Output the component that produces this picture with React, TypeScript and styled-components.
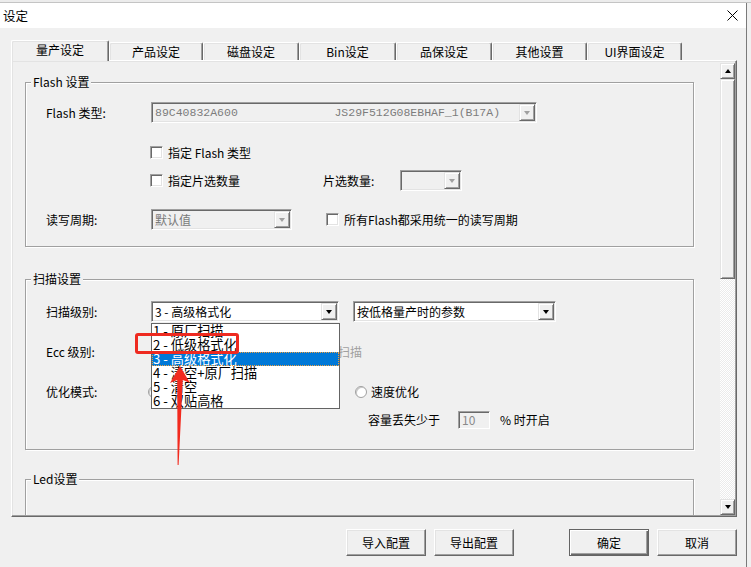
import React from "react";
import styled, { createGlobalStyle, css } from "styled-components";

const FONT = `"Noto Sans CJK SC", "Noto Sans", sans-serif`;

const Global = createGlobalStyle`
  html, body { margin: 0; padding: 0; background: #f0f0f0; }
  body { font-family: ${FONT}; font-size: 12px; color: #000; }
  * { box-sizing: border-box; }
`;

const Page = styled.div`
  position: relative;
  width: 751px;
  height: 567px;
  overflow: hidden;
  background: #f0f0f0;
  font-family: ${FONT};
  font-size: 12px;
  line-height: 14px;
`;

const TopStrip = styled.div`
  height: 3px;
  background: #ececec;
  border-bottom: 1px solid #c4c4c4;
`;

const Window = styled.div`
  width: 747px;
  height: 564px;
  border-right: 1px solid #7a7a7a;
  background: #f0f0f0;
  display: flex;
  flex-direction: column;
`;

const TitleBar = styled.div`
  height: 25px;
  flex-shrink: 0;
  background: #fff;
  display: flex;
  align-items: center;
  justify-content: space-between;
  padding: 0 8px 0 3px;
`;

const Title = styled.span`
  font-size: 12.5px;
`;

const Body = styled.div`
  padding: 12px 9px 0 11px;
  display: flex;
  flex-direction: column;
`;

const TabRow = styled.div`
  display: flex;
  align-items: flex-end;
  height: 21px;
  margin-bottom: -1px;
  position: relative;
  z-index: 1;
`;

const Tab = styled.div<{ $w: number; $active?: boolean }>`
  width: ${(p) => p.$w}px;
  height: ${(p) => (p.$active ? 21 : 18)}px;
  margin-bottom: ${(p) => (p.$active ? 0 : 1)}px;
  display: flex;
  align-items: center;
  justify-content: center;
  padding-bottom: ${(p) => (p.$active ? 2 : 0)}px;
  background: #f0f0f0;
  border-top: 1px solid #fff;
  border-left: 1px solid #fff;
  border-right: 1px solid #696969;
  border-radius: 2px 2px 0 0;
  box-shadow: inset -1px 0 0 #a0a0a0, inset 1px 1px 0 #e3e3e3;
  flex-shrink: 0;
`;

const Panel = styled.div`
  width: 726px;
  height: 457px;
  display: flex;
  border: 1px solid;
  border-color: #fff #696969 #696969 #fff;
  box-shadow: inset -1px -1px 0 #a0a0a0, inset 1px 1px 0 #e3e3e3;
`;

const Content = styled.div`
  flex: 1;
  position: relative;
  overflow: hidden;
  padding-left: 13px;
  margin-bottom: 1px;
`;

const Group = styled.div<{ $mt: number; $pb: number }>`
  position: relative;
  width: 669px;
  margin-top: ${(p) => p.$mt}px;
  padding: 0 0 ${(p) => p.$pb}px 20px;
  border: 1px solid #a0a0a0;
  box-shadow: 1px 1px 0 #fff, inset 1px 1px 0 #fff;
`;

const Legend = styled.span`
  position: absolute;
  top: -8px;
  left: 5px;
  padding: 0 2px;
  background: #f0f0f0;
  line-height: 14px;
`;

const Row = styled.div<{ $mt: number; $pl?: number }>`
  display: flex;
  align-items: center;
  height: 21px;
  margin-top: ${(p) => p.$mt}px;
  padding-left: ${(p) => p.$pl ?? 0}px;
  white-space: nowrap;
`;

const FieldLabel = styled.span<{ $w?: number }>`
  width: ${(p) => p.$w ?? 105}px;
  flex-shrink: 0;
`;

const Cell = styled.div<{ $w?: number; $ml?: number }>`
  display: flex;
  align-items: center;
  flex-shrink: 0;
  ${(p) => (p.$w !== undefined ? `width: ${p.$w}px;` : "")}
  margin-left: ${(p) => p.$ml ?? 0}px;
`;

const Combo = styled.div<{ $w: number; $disabled?: boolean }>`
  position: relative;
  width: ${(p) => p.$w}px;
  height: 21px;
  flex-shrink: 0;
  display: flex;
  align-items: center;
  padding: 0 1px 0 3px;
  background: ${(p) => (p.$disabled ? "#f0f0f0" : "#fff")};
  border: 1px solid;
  border-color: #a0a0a0 #fff #fff #a0a0a0;
  box-shadow: inset 1px 1px 0 #696969, inset -1px -1px 0 #e3e3e3;
`;

const ComboText = styled.span<{ $disabled?: boolean; $mono?: boolean }>`
  flex: 1;
  overflow: hidden;
  white-space: pre;
  line-height: 17px;
  color: ${(p) => (p.$disabled ? "#7a7a7a" : "#000")};
  ${(p) =>
    p.$mono &&
    css`
      font-family: "Liberation Mono", monospace;
      font-size: 11.5px;
      color: #7d7d7d;
    `}
`;

const DropBtn = styled.span`
  width: 16px;
  height: 17px;
  flex-shrink: 0;
  display: flex;
  align-items: center;
  justify-content: center;
  background: #f0f0f0;
  border: 1px solid;
  border-color: #e3e3e3 #696969 #696969 #e3e3e3;
  box-shadow: inset 1px 1px 0 #fff, inset -1px -1px 0 #a0a0a0;
`;

const Tri = styled.span<{ $up?: boolean; $c?: string }>`
  width: 0;
  height: 0;
  border-left: 3.5px solid transparent;
  border-right: 3.5px solid transparent;
  ${(p) =>
    p.$up
      ? `border-bottom: 4px solid ${p.$c ?? "#000"};`
      : `border-top: 4px solid ${p.$c ?? "#000"};`}
`;

const ListBox = styled.div`
  position: absolute;
  top: 21px;
  left: -1px;
  width: 189px;
  height: 86px;
  background: #fff;
  border: 1px solid #646464;
  z-index: 5;
  overflow: hidden;
`;

const ListItem = styled.div<{ $sel?: boolean }>`
  height: 14px;
  line-height: 14px;
  font-size: 13.2px;
  padding-left: 1px;
  white-space: nowrap;
  ${(p) =>
    p.$sel &&
    css`
      background: #0078d7;
      color: #fff;
      outline: 1px dotted #f0a040;
      outline-offset: -1px;
    `}
`;

const CheckItem = styled.label<{ $disabled?: boolean }>`
  display: flex;
  align-items: center;
  gap: 5px;
  color: ${(p) => (p.$disabled ? "#a0a0a0" : "#000")};
`;

const Check = styled.span`
  width: 13px;
  height: 13px;
  flex-shrink: 0;
  background: #fff;
  border: 1px solid;
  border-color: #a0a0a0 #fff #fff #a0a0a0;
  box-shadow: inset 1px 1px 0 #696969, inset -1px -1px 0 #e3e3e3;
`;

const RadioItem = styled.label`
  display: flex;
  align-items: center;
  gap: 4px;
`;

const Radio = styled.span`
  width: 12px;
  height: 12px;
  flex-shrink: 0;
  border-radius: 50%;
  background: #fff;
  border: 1px solid #a0a0a0;
  box-shadow: inset 1px 1px 0 #c8c8c8;
`;

const NumInput = styled.span`
  width: 32px;
  height: 18px;
  display: flex;
  align-items: center;
  padding-left: 3px;
  color: #8a8a8a;
  background: #f0f0f0;
  border: 1px solid;
  border-color: #a0a0a0 #fff #fff #a0a0a0;
  box-shadow: inset 1px 1px 0 #696969;
`;

const ScrollBar = styled.div`
  width: 15px;
  flex-shrink: 0;
  margin: 2px 1px 1px 0;
  display: flex;
  flex-direction: column;
`;

const ScrollBtn = styled.span`
  height: 16px;
  flex-shrink: 0;
  display: flex;
  align-items: center;
  justify-content: center;
  background: #f0f0f0;
  border: 1px solid;
  border-color: #e3e3e3 #696969 #696969 #e3e3e3;
  box-shadow: inset 1px 1px 0 #fff, inset -1px -1px 0 #a0a0a0;
`;

const Thumb = styled(ScrollBtn)`
  height: 200px;
`;

const Track = styled.div`
  flex: 1;
  background-color: #f0f0f0;
  background-image: repeating-conic-gradient(#fff 0 25%, #ebebeb 0 50%);
  background-size: 2px 2px;
`;

const ButtonRow = styled.div`
  display: flex;
  justify-content: flex-end;
  align-items: center;
  margin-top: 12px;
  width: 726px;
`;

const BtnGroup = styled.div<{ $ml?: number }>`
  display: flex;
  gap: 8px;
  margin-left: ${(p) => p.$ml ?? 0}px;
`;

const Btn = styled.button<{ $default?: boolean }>`
  width: 80px;
  height: 27px;
  padding: 0;
  font: 12px ${FONT};
  color: #000;
  background: #f0f0f0;
  border: 1px solid;
  border-color: #fff #696969 #696969 #fff;
  box-shadow: inset -1px -1px 0 #a0a0a0, inset 1px 1px 0 #e3e3e3;
  ${(p) =>
    p.$default &&
    css`
      border-color: #646464;
      box-shadow: inset 1px 1px 0 #fff, inset -1px -1px 0 #696969,
        inset -2px -2px 0 #a0a0a0;
    `}
`;

const RedBox = styled.div`
  position: absolute;
  left: 135px;
  top: 333px;
  width: 104px;
  height: 21px;
  border: 3px solid #ee2a20;
  border-radius: 3px;
  pointer-events: none;
  z-index: 10;
`;

const ArrowSvg = styled.svg`
  position: absolute;
  left: 160px;
  top: 355px;
  z-index: 10;
  pointer-events: none;
`;

const tabs: [string, number][] = [
  ["量产设定", 98],
  ["产品设定", 94],
  ["磁盘设定", 96],
  ["Bin设定", 97],
  ["品保设定", 96],
  ["其他设置", 95],
  ["UI界面设定", 95],
];

const scanItems = [
  "1 - 原厂扫描",
  "2 - 低级格式化",
  "3 - 高级格式化",
  "4 - 清空+原厂扫描",
  "5 - 清空",
  "6 - 双贴高格",
];

export default function App() {
  return (
    <Page>
      <Global />
      <TopStrip />
      <Window>
        <TitleBar>
          <Title>设定</Title>
          <svg width="11" height="11" viewBox="0 0 11 11">
            <path d="M0.5 0.5 L10.5 10.5 M10.5 0.5 L0.5 10.5" stroke="#000" strokeWidth="1" />
          </svg>
        </TitleBar>
        <Body>
          <TabRow>
            {tabs.map(([t, w], i) => (
              <Tab key={t} $w={w} $active={i === 0}>
                {t}
              </Tab>
            ))}
          </TabRow>
          <Panel>
            <Content>
              <Group $mt={21} $pb={16}>
                <Legend>Flash 设置</Legend>
                <Row $mt={19}>
                  <FieldLabel>Flash 类型:</FieldLabel>
                  <Combo $w={386} $disabled>
                    <ComboText $mono>{"89C40832A600              JS29F512G08EBHAF_1(B17A)"}</ComboText>
                    <DropBtn>
                      <Tri $c="#a0a0a0" />
                    </DropBtn>
                  </Combo>
                </Row>
                <Row $mt={19}>
                  <Cell $ml={104}>
                    <CheckItem>
                      <Check />
                      指定 Flash 类型
                    </CheckItem>
                  </Cell>
                </Row>
                <Row $mt={7}>
                  <Cell $ml={104} $w={173}>
                    <CheckItem>
                      <Check />
                      指定片选数量
                    </CheckItem>
                  </Cell>
                  <FieldLabel $w={77}>片选数量:</FieldLabel>
                  <Combo $w={62} $disabled>
                    <ComboText $disabled />
                    <DropBtn>
                      <Tri $c="#a0a0a0" />
                    </DropBtn>
                  </Combo>
                </Row>
                <Row $mt={18}>
                  <FieldLabel>读写周期:</FieldLabel>
                  <Combo $w={141} $disabled>
                    <ComboText $disabled>默认值</ComboText>
                    <DropBtn>
                      <Tri $c="#a0a0a0" />
                    </DropBtn>
                  </Combo>
                  <Cell $ml={34}>
                    <CheckItem>
                      <Check />
                      所有Flash都采用统一的读写周期
                    </CheckItem>
                  </Cell>
                </Row>
              </Group>

              <Group $mt={32} $pb={19}>
                <Legend>扫描设置</Legend>
                <Row $mt={21}>
                  <FieldLabel>扫描级别:</FieldLabel>
                  <Combo $w={188}>
                    <ComboText>3 - 高级格式化</ComboText>
                    <DropBtn>
                      <Tri />
                    </DropBtn>
                    <ListBox>
                      {scanItems.map((s, i) => (
                        <ListItem key={s} $sel={i === 2}>
                          {s}
                        </ListItem>
                      ))}
                    </ListBox>
                  </Combo>
                  <Cell $ml={14}>
                    <Combo $w={203}>
                      <ComboText>按低格量产时的参数</ComboText>
                      <DropBtn>
                        <Tri />
                      </DropBtn>
                    </Combo>
                  </Cell>
                </Row>
                <Row $mt={19}>
                  <FieldLabel>Ecc 级别:</FieldLabel>
                  <Cell $ml={121}>
                    <CheckItem $disabled>
                      <Check />
                      启用原厂扫描
                    </CheckItem>
                  </Cell>
                </Row>
                <Row $mt={19}>
                  <FieldLabel $w={102}>优化模式:</FieldLabel>
                  <Cell $w={207}>
                    <RadioItem>
                      <Radio />
                      容量优化
                    </RadioItem>
                  </Cell>
                  <RadioItem>
                    <Radio />
                    速度优化
                  </RadioItem>
                </Row>
                <Row $mt={7} $pl={322}>
                  <span>容量丢失少于</span>
                  <Cell $ml={18}>
                    <NumInput>10</NumInput>
                  </Cell>
                  <Cell $ml={10}>% 时开启</Cell>
                </Row>
              </Group>

              <Group $mt={29} $pb={20}>
                <Legend>Led设置</Legend>
                <Row $mt={30}>
                  <FieldLabel>Led灯状态指示:</FieldLabel>
                  <Cell $ml={20}>慢闪</Cell>
                  <Cell $ml={70}>快闪</Cell>
                </Row>
              </Group>
            </Content>
            <ScrollBar>
              <ScrollBtn>
                <Tri $up />
              </ScrollBtn>
              <Thumb />
              <Track />
              <ScrollBtn>
                <Tri />
              </ScrollBtn>
            </ScrollBar>
          </Panel>
          <ButtonRow>
            <BtnGroup>
              <Btn>导入配置</Btn>
              <Btn>导出配置</Btn>
            </BtnGroup>
            <BtnGroup $ml={55}>
              <Btn $default>确定</Btn>
              <Btn>取消</Btn>
            </BtnGroup>
          </ButtonRow>
        </Body>
      </Window>
      <RedBox />
      <ArrowSvg width="40" height="115" viewBox="0 0 40 115">
        <polygon
          points="20,11 30,28 22.8,25 18.6,110 17.6,110 17.2,25 10,28"
          fill="#f22a1e"
        />
      </ArrowSvg>
    </Page>
  );
}
